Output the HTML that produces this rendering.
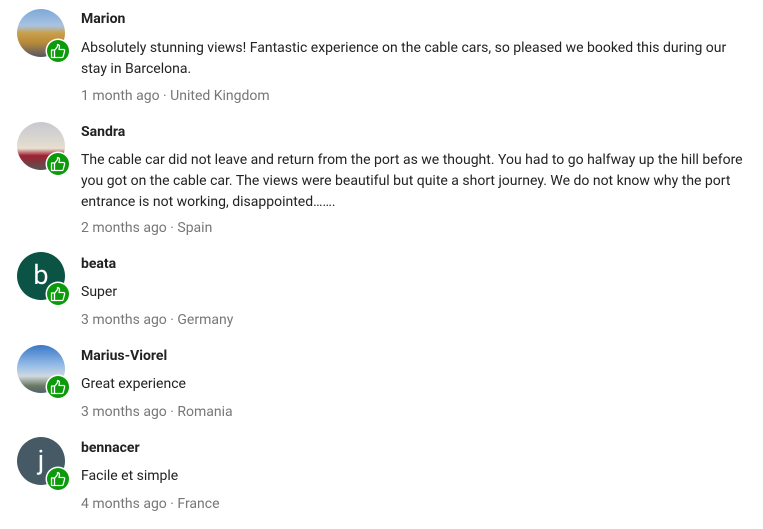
<!DOCTYPE html>
<html><head><meta charset="utf-8"><style>
body{margin:0;width:763px;height:529px;background:#fff;font-family:"Roboto","Liberation Sans",sans-serif;position:relative;overflow:hidden}
.av{position:absolute;left:17px;width:48px;height:48px;border-radius:50%;overflow:hidden;color:#fff;font-size:27px;text-align:center;line-height:46px}
.bd{position:absolute;left:47px;width:22px;height:22px;border-radius:50%;background:#0a9a0a;box-shadow:0 0 0 1.5px #fff}
.bd svg{position:absolute;left:3px;top:3px}
.t{position:absolute;left:81px;font-size:14px;color:#222;white-space:nowrap;line-height:21px}
.n{font-weight:bold;color:#222}
.m{color:#777}
</style></head><body>
<div class="av" style="top:9px;background:linear-gradient(#7fa8d8 0%,#a9c3e0 35%,#c9a04a 50%,#b88a3a 70%,#556 100%)"></div>
<div class="t n" style="top:9px">Marion</div>
<div class="t" style="top:38px">Absolutely stunning views! Fantastic experience on the cable cars, so pleased we booked this during our<br>stay in Barcelona.</div>
<div class="t m" style="top:86px">1 month ago · United Kingdom</div>
<div class="av" style="top:122px;background:linear-gradient(#c8c8d0 0%,#dcd8d0 40%,#e8e0d0 55%,#a02030 70%,#555 100%)"></div>
<div class="t n" style="top:122px">Sandra</div>
<div class="t" style="top:150px">The cable car did not leave and return from the port as we thought. You had to go halfway up the hill before<br>you got on the cable car. The views were beautiful but quite a short journey. We do not know why the port<br>entrance is not working, disappointed…….</div>
<div class="t m" style="top:218px">2 months ago · Spain</div>
<div class="av" style="top:252px;background:#0b5345">b</div>
<div class="t n" style="top:254px">beata</div>
<div class="t" style="top:282px">Super</div>
<div class="t m" style="top:310px">3 months ago · Germany</div>
<div class="av" style="top:345px;background:linear-gradient(#3a78c8 0%,#9cc0e8 45%,#d0d8e0 65%,#6a7a60 85%,#506070 100%)"></div>
<div class="t n" style="top:346px">Marius-Viorel</div>
<div class="t" style="top:374px">Great experience</div>
<div class="t m" style="top:402px">3 months ago · Romania</div>
<div class="av" style="top:437px;background:#455a64">j</div>
<div class="t n" style="top:438px">bennacer</div>
<div class="t" style="top:466px">Facile et simple</div>
<div class="t m" style="top:494px">4 months ago · France</div>

<div class="bd" style="top:40px"><svg width="16" height="16" viewBox="0 0 16 16"><path d="M1.5 7h3v7.5h-3zM4.5 7.5 7.5 3.5V1.5c1.5 0 2 1 2 2.5L9 6.5h4.5c1 0 1.3.8 1.1 1.5l-1.4 5.5c-.2.7-.7 1-1.3 1H4.5" fill="none" stroke="#fff" stroke-width="1.3" stroke-linejoin="round"/></svg></div>
<div class="bd" style="top:153px"><svg width="16" height="16" viewBox="0 0 16 16"><path d="M1.5 7h3v7.5h-3zM4.5 7.5 7.5 3.5V1.5c1.5 0 2 1 2 2.5L9 6.5h4.5c1 0 1.3.8 1.1 1.5l-1.4 5.5c-.2.7-.7 1-1.3 1H4.5" fill="none" stroke="#fff" stroke-width="1.3" stroke-linejoin="round"/></svg></div>
<div class="bd" style="top:283px"><svg width="16" height="16" viewBox="0 0 16 16"><path d="M1.5 7h3v7.5h-3zM4.5 7.5 7.5 3.5V1.5c1.5 0 2 1 2 2.5L9 6.5h4.5c1 0 1.3.8 1.1 1.5l-1.4 5.5c-.2.7-.7 1-1.3 1H4.5" fill="none" stroke="#fff" stroke-width="1.3" stroke-linejoin="round"/></svg></div>
<div class="bd" style="top:376px"><svg width="16" height="16" viewBox="0 0 16 16"><path d="M1.5 7h3v7.5h-3zM4.5 7.5 7.5 3.5V1.5c1.5 0 2 1 2 2.5L9 6.5h4.5c1 0 1.3.8 1.1 1.5l-1.4 5.5c-.2.7-.7 1-1.3 1H4.5" fill="none" stroke="#fff" stroke-width="1.3" stroke-linejoin="round"/></svg></div>
<div class="bd" style="top:468px"><svg width="16" height="16" viewBox="0 0 16 16"><path d="M1.5 7h3v7.5h-3zM4.5 7.5 7.5 3.5V1.5c1.5 0 2 1 2 2.5L9 6.5h4.5c1 0 1.3.8 1.1 1.5l-1.4 5.5c-.2.7-.7 1-1.3 1H4.5" fill="none" stroke="#fff" stroke-width="1.3" stroke-linejoin="round"/></svg></div>
</body></html>
